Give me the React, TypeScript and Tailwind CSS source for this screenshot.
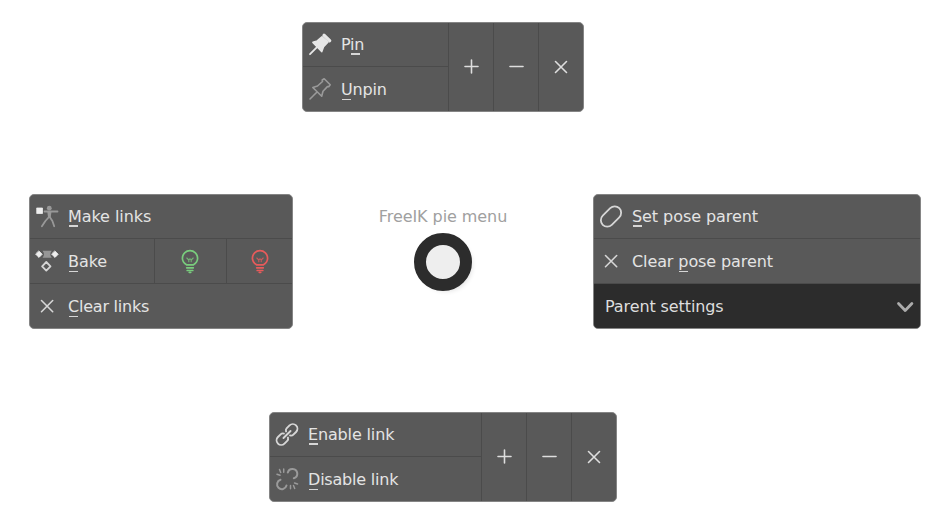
import type { ReactNode } from "react";

const panel =
  "flex overflow-hidden rounded-[5px] border border-[#858585] bg-[#595959] text-[#e4e4e4]";

function Icon({ children, color = "#d6d6d6", w = 1.8 }: { children: ReactNode; color?: string; w?: number }) {
  return (
    <svg
      className="h-11 w-[38px] shrink-0"
      viewBox="1 1 38 44"
      fill="none"
      stroke={color}
      strokeWidth={w}
      strokeLinecap="round"
      strokeLinejoin="round"
    >
      {children}
    </svg>
  );
}

function Label({
  before = "",
  keyed,
  after,
  tracking = "tracking-[-0.07px]",
}: {
  before?: string;
  keyed: string;
  after: string;
  tracking?: string;
}) {
  return (
    <span className={`whitespace-pre ${tracking}`}>
      {before}
      <span className="relative">
        {keyed}
        <span className="absolute -bottom-px left-[1px] h-[1.5px] w-[8.5px] bg-[#d6d6d6]" />
      </span>
      {after}
    </span>
  );
}

const rowKinds = {
  first: "flex h-11 items-center border-b border-[#4b4b4b]",
  middle: "flex h-[45px] items-center border-b border-[#4b4b4b] pt-[2px]",
  last: "flex h-11 items-center pt-[2px]",
};

function Row({ children, kind }: { children: ReactNode; kind: keyof typeof rowKinds }) {
  return <div className={rowKinds[kind]}>{children}</div>;
}

function Cross() {
  return (
    <Icon w={1.6}>
      <path d="M12.500 16.500l11.200 11.200M23.700 16.500L12.500 27.700" />
    </Icon>
  );
}

function Operators() {
  const shapes = ["M9 15.500h13M15.500 9v13", "M9 15.500h13", "M9.500 10.500l11 11M20.500 10.500l-11 11"];
  return (
    <>
      {shapes.map((d) => (
        <div key={d} className="flex w-[45px] items-center border-l border-[#4b4b4b] pl-[7px]">
          <svg className="h-8 w-8" viewBox="0 0 32 32" fill="none" stroke="#dedede" strokeWidth="1.600" strokeLinecap="round">
            <path d={d} />
          </svg>
        </div>
      ))}
    </>
  );
}

function Bulb({ color }: { color: string }) {
  return (
    <svg className="h-11 w-5" viewBox="0 -0.5 20 44" fill="none" stroke={color} strokeWidth="1.700" strokeLinecap="round">
      <path d="M6.500 25.300C4 23.800 2.400 21.400 2.400 18.800a7.600 7.600 0 0 1 15.200 0c0 2.600-1.600 5-4.100 6.500zM6.700 28.300h6.600M7.200 31h5.600" />
      <path d="M9.300 32.800h1.400" strokeWidth="1.800" />
      <path d="M6.800 18.500l1.700 1.700 1.500-.8 1.500.8 1.700-1.700M8.800 20.500v1.800M11.200 20.500v1.800" strokeWidth="1.100" opacity=".8" />
    </svg>
  );
}

export default function App() {
  return (
    <main className="h-[530px] w-[935px] overflow-hidden bg-white pt-[22px] font-['DejaVu_Sans',sans-serif] text-[16px] leading-5">
      <section className={`${panel} ml-[302px] h-[90px] w-[282px]`}>
        <div className="w-[145px]">
          <Row kind="first">
            <Icon color="#e6e6e6">
              <path d="M8 32.200l7-7" />
              <path d="M20 15l-4.700 4-4.300 1.300 8.700 9.200 1.800-5 4.300-4.300z" fill="#e6e6e6" />
              <path d="M22 13.300l5.700 5.400" strokeWidth="3.300" />
            </Icon>
            <Label before="P" keyed="i" after="n" tracking="tracking-[-0.25px]" />
          </Row>
          <Row kind="last">
            <Icon color="#9a9a9a" w={1.600}>
              <path d="M8 32l7-7M10.800 20.500l4.700-1.500 5-4.500-.3-1.500 2-1.200 6 6-1.500 2-1.300-.2-4.400 4.700-1.300 5z" />
            </Icon>
            <Label keyed="U" after="npin" tracking="tracking-[-0.15px]" />
          </Row>
        </div>
        <Operators />
      </section>

      <div className="mt-[82px] flex h-[135px] items-start">
        <section className={`${panel} ml-[29px] h-[135px] w-[264px] flex-col`}>
          <Row kind="first">
            <Icon color="#989898">
              <path d="M8 14h5.500v5.500H8z" fill="#eee" stroke="#eee" strokeWidth=".8" />
              <circle cx="20.300" cy="14.200" r="2.400" fill="#989898" stroke="none" />
              <path d="M15.500 17.500h13M20.400 18v5M20.400 22.500l-4 4.500-3.500 5.200M20.400 22.500l3 4.500 1.800 5.200" />
              <path d="M18.300 17.500h4.200l-.8 6h-2.600z" fill="#989898" stroke="none" />
            </Icon>
            <Label keyed="M" after="ake links" />
          </Row>
          <div className="flex border-b border-[#4b4b4b]">
            <div className="flex h-11 w-[124px] items-center pt-[2px]">
              <Icon>
                <path d="M13.500 11.700h9.300q-3 3.500 0 7h-9.300q3-3.500 0-7z" fill="#969696" stroke="none" />
                <path d="M10 12.200l3.100 3.100-3.100 3.100-3.100-3.100zM26 12.200l3.100 3.100-3.100 3.100-3.100-3.100z" fill="#eee" stroke="#eee" strokeWidth="1" />
                <path d="M17.300 23l4.200 4.300-4.200 4.300-4.200-4.300z" />
              </Icon>
              <Label keyed="B" after="ake" />
            </div>
            <div className="flex w-[72px] border-l border-[#4b4b4b] pl-[25px]">
              <Bulb color="#79cc7d" />
            </div>
            <div className="flex flex-1 border-l border-[#4b4b4b] pl-[23px]">
              <Bulb color="#e65b5b" />
            </div>
          </div>
          <Row kind="last">
            <Cross />
            <Label keyed="C" after="lear links" tracking="tracking-[-0.22px]" />
          </Row>
        </section>

        <div className="ml-[86px] flex w-[128px] flex-col items-center pt-[13px]">
          <h1 className="whitespace-nowrap tracking-[-0.07px] text-[#a0a0a0]">FreeIK pie menu</h1>
          <div className="mt-[6px] h-[58px] w-[58px] rounded-full border-12 border-[#2c2c2c] bg-[#eee] shadow-[3px_3px_5px_-3px_#ddd]" />
        </div>

        <section className={`${panel} ml-[86px] h-[135px] w-[328px] flex-col`}>
          <Row kind="first">
            <Icon>
              <rect x="6.300" y="16.100" width="23.400" height="12.800" rx="6.400" transform="rotate(-45 18 22.500)" />
            </Icon>
            <Label keyed="S" after="et pose parent" />
          </Row>
          <Row kind="middle">
            <Cross />
            <Label before="Clear " keyed="p" after="ose parent" tracking="tracking-[-0.1px]" />
          </Row>
          <div className="flex h-11 items-center justify-between bg-[#2c2c2c] pl-[11px] pr-[6px] pt-[2px] tracking-[-0.1px] text-[#dedede]">
            Parent settings
            <svg className="h-11 w-[18px]" viewBox="0 0 18 44" fill="none" stroke="#acacac" strokeWidth="2.800" strokeLinecap="round" strokeLinejoin="round">
              <path d="M2.500 18.500l6.700 7 6.700-7" />
            </svg>
          </div>
        </section>
      </div>

      <section className={`${panel} ml-[269px] mt-[83px] h-[90px] w-[348px]`}>
        <div className="w-[211px]">
          <Row kind="first">
            <Icon>
              <g transform="translate(18 22.500) rotate(-45)">
                <path d="M-1.500-2.800Q-2.500-4.600-4-4.600H-8.200A4.600 4.600 0 0 0-8.200 4.600H-4Q-2.500 4.600-1.500 2.800M1.500-2.800Q2.500-4.600 4-4.600H8.200A4.600 4.600 0 0 1 8.200 4.600H4Q2.500 4.600 1.500 2.800M-5 0H5" strokeWidth="1.900" />
              </g>
            </Icon>
            <Label keyed="E" after="nable link" tracking="tracking-[-0.15px]" />
          </Row>
          <Row kind="last">
            <Icon color="#9a9a9a" w={2}>
              <path d="M18.800 15.600A4.800 4.800 0 1 1 24.800 21.300M11.500 22.700A4.800 4.800 0 1 0 17.500 28.500" />
              <path d="M8 17.300l3 1M10.500 12.500l1.200 3M14.700 12v3.200M21.500 28.500v3.200M24.500 28.500l1.200 3M25.500 26l3 1" strokeWidth="1.500" />
            </Icon>
            <Label keyed="D" after="isable link" tracking="tracking-[-0.2px]" />
          </Row>
        </div>
        <Operators />
      </section>
    </main>
  );
}
